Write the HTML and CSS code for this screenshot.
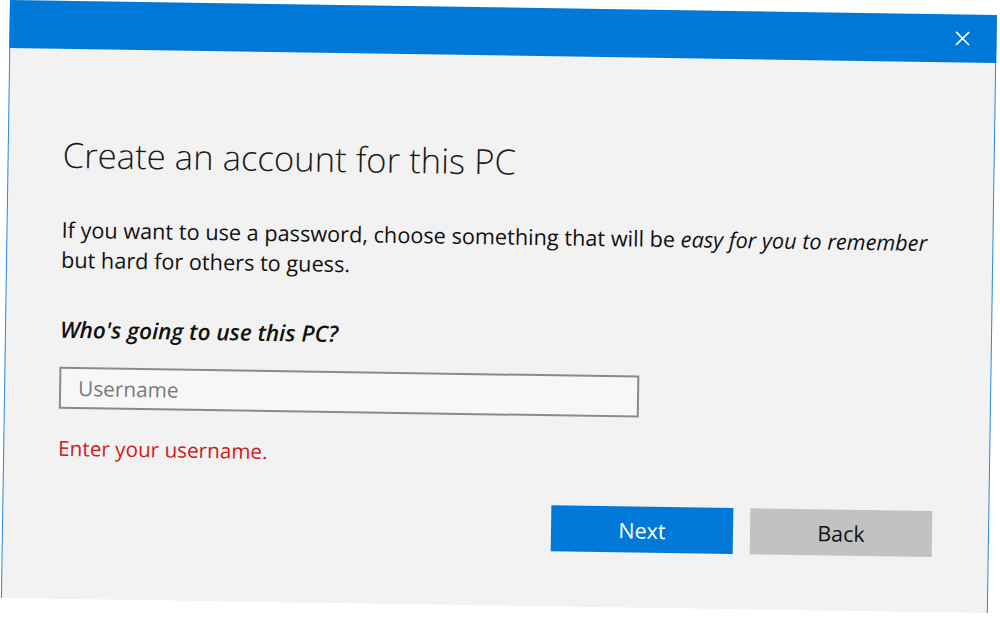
FILE: index.html
```html
<!DOCTYPE html>
<html lang="en">
<head>
<meta charset="utf-8">
<title>Create an account for this PC</title>
<link rel="stylesheet" href="styles.css">
</head>
<body>
<div class="dialog">
  <div class="titlebar">
    <svg class="close" width="16" height="16" viewBox="0 0 16 16" aria-label="Close">
      <path d="M1.5 1.5 L14.5 14.5 M14.5 1.5 L1.5 14.5" stroke="#ffffff" stroke-width="1.6" fill="none"/>
    </svg>
  </div>
  <div class="content">
    <h1 class="title">Create an account for this PC</h1>
    <p class="desc">If you want to use a password, choose something that will be <i>easy for you to remember</i> but hard for others to guess.</p>
    <h2 class="question">Who's going to use this PC?</h2>
    <div class="field"><span class="placeholder">Username</span></div>
    <p class="error">Enter your username.</p>
    <div class="actions">
      <button class="btn primary">Next</button>
      <button class="btn secondary">Back</button>
    </div>
  </div>
</div>
</body>
</html>
```
FILE: styles.css
```css
html, body {
  margin: 0;
  padding: 0;
  background: #ffffff;
  overflow: hidden;
  width: 1000px;
  height: 618px;
}
.dialog {
  box-sizing: border-box;
  width: 987px;
  height: 598px;
  margin-left: 10px;
  transform: rotate(0.87deg);
  transform-origin: 0 0;
  background: #f2f2f2;
  border-left: 1px solid #2a8ae0;
  border-right: 1px solid #2a8ae0;
  font-family: "Open Sans", "Liberation Sans", sans-serif;
  color: #111111;
  display: flex;
  flex-direction: column;
}
.titlebar {
  height: 48px;
  background: #0078d7;
  display: flex;
  align-items: center;
  justify-content: flex-end;
  padding-right: 26px;
  margin: 0 -1px;
}
.content {
  padding: 0 56px 0 54px;
  display: flex;
  flex-direction: column;
}
.title {
  margin: 86px 0 0 0;
  font-weight: 300;
  font-size: 34.7px;
  line-height: 40px;
  color: #1a1a1a;
}
.desc {
  margin: 40px 0 0 0;
  font-size: 21.7px;
  line-height: 30px;
  color: #111111;
}
.desc i {
  font-style: italic;
}
.question {
  margin: 42px 0 0 0;
  font-size: 22.5px;
  font-weight: 600;
  font-style: italic;
  line-height: 26px;
  color: #111111;
}
.field {
  box-sizing: border-box;
  margin-top: 24px;
  width: 580px;
  height: 42px;
  border: 2px solid #8a8a8a;
  background: #f7f7f7;
  display: flex;
  align-items: center;
  padding-left: 17px;
}
.placeholder {
  font-size: 20.8px;
  color: #7a7a7a;
}
.error {
  margin: 26px 0 0 0;
  font-size: 20.7px;
  line-height: 26px;
  color: #d0191f;
}
.actions {
  display: flex;
  justify-content: flex-end;
  gap: 17px;
  margin-top: 37px;
}
.btn {
  width: 182px;
  height: 46px;
  border: none;
  font-family: "Open Sans", "Liberation Sans", sans-serif;
  font-size: 21.5px;
  padding: 0;
}
.primary {
  background: #0078d7;
  color: #ffffff;
}
.secondary {
  background: #c2c2c2;
  color: #111111;
}
```
